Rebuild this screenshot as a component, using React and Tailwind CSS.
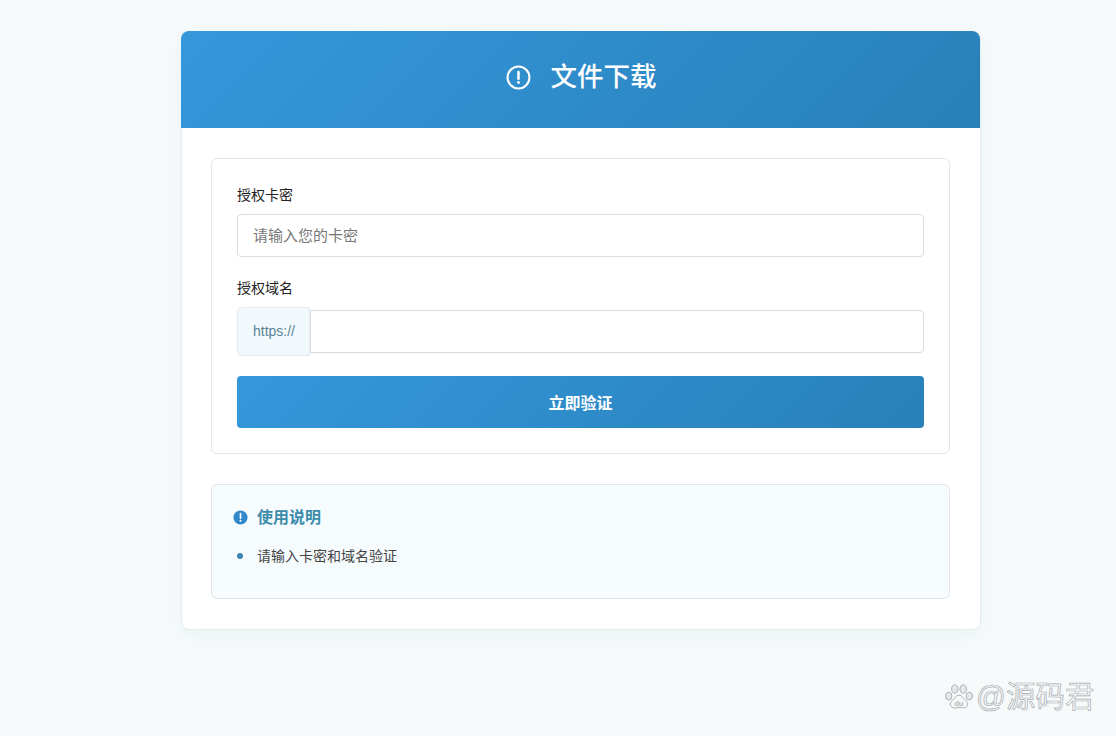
import React from "react";

const FONT = "font-['Liberation_Sans','Noto_Sans_CJK_SC',sans-serif]";

function AlertIcon({ className }) {
  return (
    <svg viewBox="0 0 24 24" className={className} fill="none">
      <circle cx="12" cy="12" r="10.5" stroke="currentColor" strokeWidth="2" />
      <path d="M12 6.8v6.4" stroke="currentColor" strokeWidth="2.4" strokeLinecap="round" />
      <circle cx="12" cy="16.8" r="1.4" fill="currentColor" />
    </svg>
  );
}

function SolidAlert({ className }) {
  return (
    <svg viewBox="0 0 16 16" className={className}>
      <circle cx="8" cy="8" r="7.5" fill="#3188c9" />
      <path d="M8 3.8v5" stroke="#fff" strokeWidth="1.8" strokeLinecap="round" />
      <circle cx="8" cy="11.5" r="1.05" fill="#fff" />
    </svg>
  );
}

function BaiduPaw() {
  return (
    <svg viewBox="0 0 32 32" className="h-[30px] w-[30px]" fill="#e4e8ea" stroke="#a9adb0" strokeWidth="1">
      <ellipse cx="5" cy="15" rx="3.4" ry="4.2" />
      <ellipse cx="11.5" cy="7.5" rx="3.4" ry="4.4" />
      <ellipse cx="20.5" cy="7.5" rx="3.4" ry="4.4" />
      <ellipse cx="27" cy="15" rx="3.4" ry="4.2" />
      <path d="M16 14c-3 0-4.500 3-6.500 5-2 2-3.500 3.500-2.500 6 1 2.500 3.500 3 5.500 2.500 2-.4 5-.4 7 0 2 .5 4.500 0 5.500-2.500 1-2.500-.5-4-2.500-6-2-2-3.500-5-6.500-5z" fill="#f4f6f7" />
      <text x="16" y="26" textAnchor="middle" fontSize="8" fontFamily="Liberation Sans" fill="#9a9ea1" stroke="none">du</text>
    </svg>
  );
}

export default function App() {
  return (
    <div className={`${FONT} relative h-[736px] overflow-hidden bg-[#f6fafb] pt-[31px]`}>
      <div className="ml-[181px] h-[599px] w-[800px] rounded-lg border border-[#e6ebee] bg-white shadow-[0_5px_20px_rgba(40,90,130,0.05)]">
        <div className="-mx-px -mt-px mr-0 flex h-[97px] items-center justify-center gap-[20px] rounded-t-lg bg-[linear-gradient(135deg,#3498db,#2980b9)] pb-[5px] pl-[1px] text-white">
          <AlertIcon className="h-[25px] w-[25px]" />
          <h1 className="text-[26.500px] font-medium leading-none">文件下载</h1>
        </div>

        <div className="pl-[29px] pr-[30px] pt-[30px]">
          <div className="h-[296px] rounded-md border border-[#e3e6e8] bg-white px-[25px] pt-[26px]">
            <label className="block h-[21px] text-[14px] leading-[20px] text-[#222]">授权卡密</label>
            <input
              placeholder="请输入您的卡密"
              readOnly
              className="mt-[8px] block h-[43px] w-full rounded border border-[#dcdfe2] bg-white px-[15px] text-[15px] outline-none placeholder:text-[#777]"
            />
            <label className="mt-[21px] block h-[21px] text-[14px] leading-[20px] text-[#222]">授权域名</label>
            <div className="mt-[8px] flex h-[49px] items-center">
              <div className="flex h-[49px] w-[73px] items-center justify-center rounded-l border border-[#e4ecf0] bg-[#f2f9fd] pl-[1px] text-[14px] text-[#5a8496]">
                https://
              </div>
              <input readOnly className="h-[43px] min-w-0 flex-1 rounded-r border border-[#d9dcdf] bg-white outline-none" />
            </div>
            <button className="mt-[20px] flex h-[52px] w-full items-center justify-center rounded bg-[linear-gradient(135deg,#3498db,#2980b9)] pt-[3px] text-[16px] font-bold text-white">
              立即验证
            </button>
          </div>

          <div className="mt-[30px] h-[115px] rounded-md border border-[#e3e6e8] bg-[#f6fbfe] px-[21px] pt-[23px]">
            <div className="flex h-[20px] items-center gap-[9px]">
              <SolidAlert className="h-[15px] w-[15px] -translate-y-[1px]" />
              <h3 className="text-[16px] font-bold leading-[20px] text-[#3b8cab]">使用说明</h3>
            </div>
            <ul className="mt-[18px]">
              <li className="flex h-[20px] items-center text-[14px] text-[#444]">
                <span className="ml-[4px] mr-[14px] h-[6px] w-[6px] rounded-full bg-[#3f83b0]" />
                请输入卡密和域名验证
              </li>
            </ul>
          </div>
        </div>
      </div>

      <div className="absolute left-[944px] top-[681px] flex items-center gap-[2px]">
        <BaiduPaw />
        <span className="text-[29.500px] leading-[32px] text-[#f6f8f9] [-webkit-text-stroke:0.7px_#a8acaf]">@源码君</span>
      </div>
    </div>
  );
}
